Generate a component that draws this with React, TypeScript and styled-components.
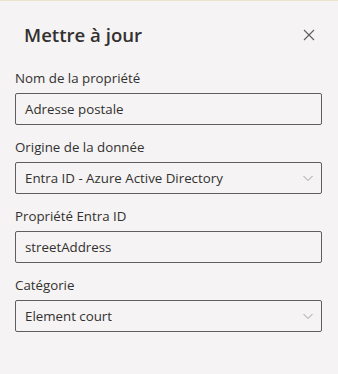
import { FunctionComponent } from "react";
import styled, { createGlobalStyle } from "styled-components";

const GlobalStyle = createGlobalStyle`
  html, body {
    margin: 0;
    padding: 0;
    background: #f5f3f3;
  }
  * {
    box-sizing: border-box;
  }
`;

const Panel = styled.div`
  width: 338px;
  height: 374px;
  background: #f5f3f3;
  border-top: 1px solid #ece2cc;
  font-family: "Open Sans", "Noto Sans", sans-serif;
  color: #323130;
  display: flex;
  flex-direction: column;
`;

const Header = styled.div`
  display: flex;
  align-items: center;
  justify-content: space-between;
  height: 67px;
  padding: 0 13px 0 24px;
`;

const Title = styled.h1`
  margin: 0;
  font-size: 18.6px;
  font-weight: 600;
  line-height: 28px;
  color: #323130;
`;

const CloseButton = styled.button`
  width: 32px;
  height: 32px;
  display: flex;
  align-items: center;
  justify-content: center;
  border: none;
  background: transparent;
  padding: 0;
  color: #605e5c;
`;

const Form = styled.div`
  display: flex;
  flex-direction: column;
  gap: 12px;
  padding: 0 16px 0 15px;
`;

const Field = styled.div`
  display: flex;
  flex-direction: column;
  gap: 5px;
`;

const Label = styled.label`
  font-size: 13.3px;
  line-height: 20px;
  color: #323130;
`;

const Box = styled.div`
  height: 32px;
  display: flex;
  align-items: center;
  justify-content: space-between;
  padding: 0 7px 0 9px;
  border: 1px solid #605e5c;
  border-radius: 2px;
  background: #f5f3f3;
  font-size: 13.3px;
  color: #323130;
`;

const Chevron = () => (
  <svg width="12" height="12" viewBox="0 0 12 12" fill="none">
    <path d="M1.5 4 L6 8.5 L10.5 4" stroke="#a19f9d" strokeWidth="1" />
  </svg>
);

const CloseIcon = () => (
  <svg width="12" height="12" viewBox="0 0 12 12" fill="none">
    <path d="M1 1 L11 11 M11 1 L1 11" stroke="#605e5c" strokeWidth="1.1" />
  </svg>
);

type FieldProps = { label: string; value: string; select?: boolean };

const FormField: FunctionComponent<FieldProps> = ({ label, value, select }) => (
  <Field>
    <Label>{label}</Label>
    <Box>
      <span>{value}</span>
      {select && <Chevron />}
    </Box>
  </Field>
);

const App: FunctionComponent = () => {
  return (
    <>
      <GlobalStyle />
      <Panel>
        <Header>
          <Title>Mettre à jour</Title>
          <CloseButton aria-label="Fermer">
            <CloseIcon />
          </CloseButton>
        </Header>
        <Form>
          <FormField label="Nom de la propriété" value="Adresse postale" />
          <FormField
            label="Origine de la donnée"
            value="Entra ID - Azure Active Directory"
            select
          />
          <FormField label="Propriété Entra ID" value="streetAddress" />
          <FormField label="Catégorie" value="Element court" select />
        </Form>
      </Panel>
    </>
  );
};

export default App;
